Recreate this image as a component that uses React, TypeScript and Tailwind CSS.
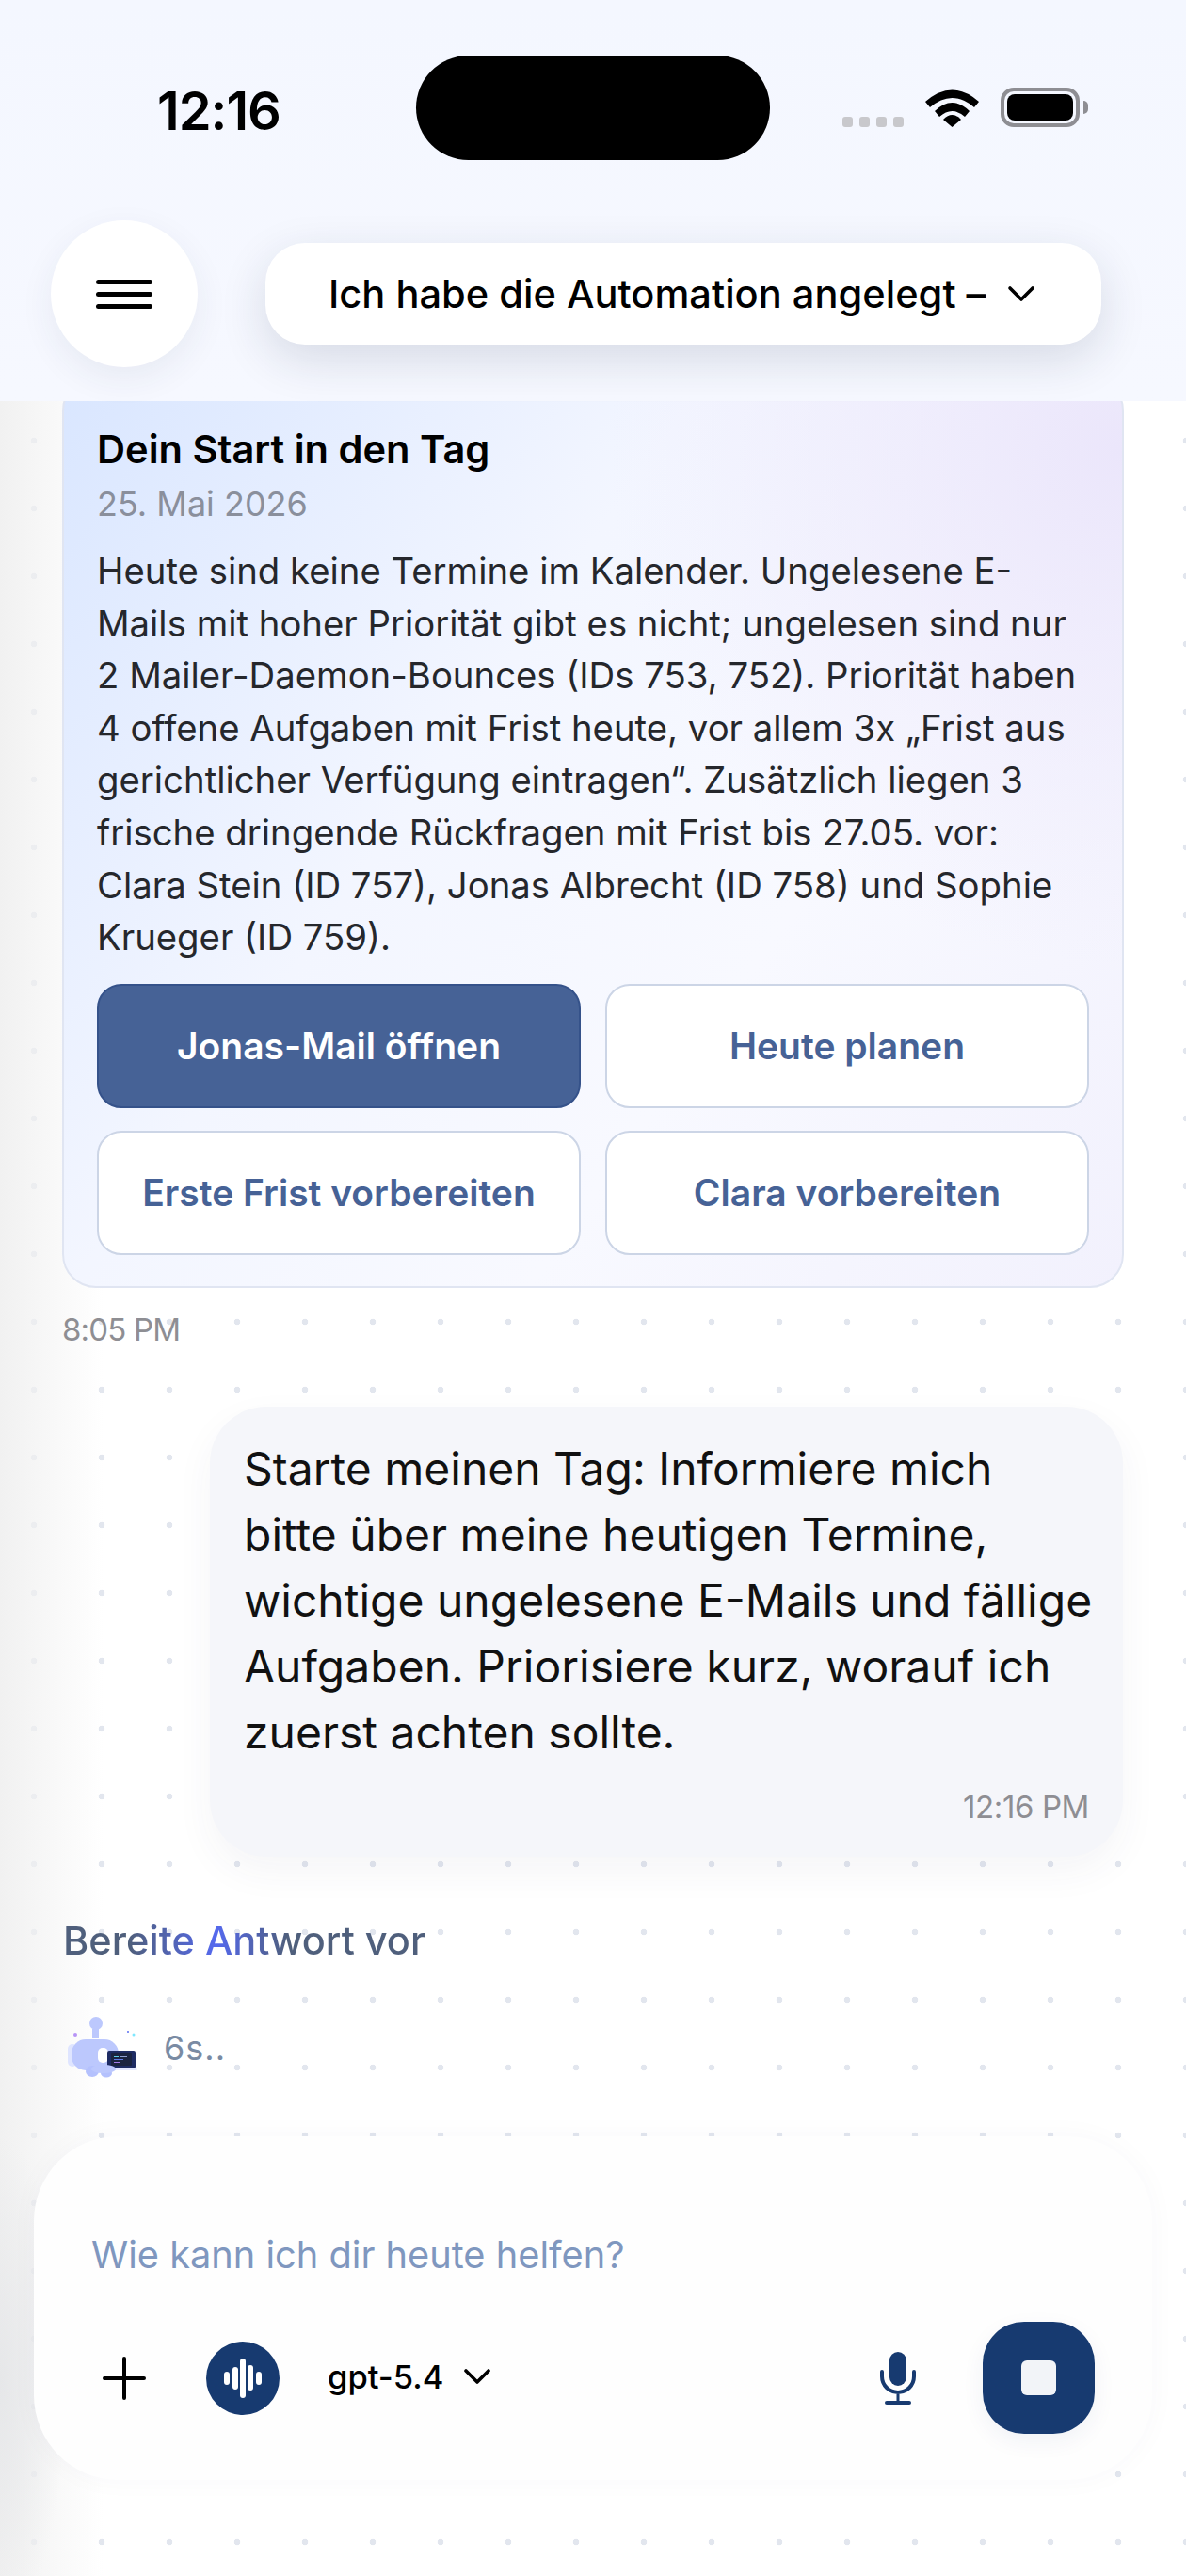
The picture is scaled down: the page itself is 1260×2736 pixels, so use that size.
import React from "react";
import { ChevronDown } from "lucide-react";

function StatusBar() {
  return (
    <div className="flex h-[174px] items-start pt-[59px]">
      <div className="w-[442px] pl-[167px] pt-[24px] text-[56px] leading-[70px] font-semibold tracking-[-1px] text-black">12:16</div>
      {/* Dynamic island */}
      <div className="h-[111px] w-[376px] rounded-full bg-black" />
      <div className="ml-[77px] mt-[34px] flex items-start">
        <div className="mt-[31px] flex gap-[7px]">
          <span className="h-[11px] w-[11px] rounded-[3px] bg-[#c8c8cc]" />
          <span className="h-[11px] w-[11px] rounded-[3px] bg-[#c8c8cc]" />
          <span className="h-[11px] w-[11px] rounded-[3px] bg-[#c8c8cc]" />
          <span className="h-[11px] w-[11px] rounded-[3px] bg-[#c8c8cc]" />
        </div>
        <svg className="ml-[23px]" width="57" height="42" viewBox="0 0 57 42">
          <path d="M0 15 Q28.5 -10 57 15 L52 21 Q28.5 1 5 21Z" fill="#000" />
          <path d="M10 25 Q28.5 7 47 25 L42 31 Q28.5 19 15 31Z" fill="#000" />
          <path d="M19 34 Q28.5 24 38 34 L28.5 42Z" fill="#000" />
        </svg>
        <div className="ml-[23px] flex items-center">
          <div className="h-[42px] w-[84px] rounded-[14px] border-[4px] border-[#8e8e93] p-[3px]">
            <div className="h-full w-full rounded-[8px] bg-black" />
          </div>
          <div className="ml-[4px] h-[14px] w-[5px] rounded-r-full bg-[#8e8e93]" />
        </div>
      </div>
    </div>
  );
}

function TopBar() {
  return (
    <div className="flex items-center pl-[54px] pt-[60px]">
      <button className="flex h-[156px] w-[156px] flex-col items-center justify-center gap-[8px] rounded-full bg-white shadow-[0_12px_36px_rgba(40,50,80,0.07)]">
        <span className="h-[5px] w-[60px] rounded-full bg-black" />
        <span className="h-[5px] w-[60px] rounded-full bg-black" />
        <span className="h-[5px] w-[60px] rounded-full bg-black" />
      </button>
      <button className="ml-[72px] flex h-[108px] w-[888px] items-center rounded-[42px] bg-white pl-[67px] text-[41.6px] font-medium text-black shadow-[0_16px_50px_rgba(30,40,70,0.14)]">
        <span className="w-[701px] whitespace-nowrap text-left">Ich habe die Automation angelegt –</span>
        <ChevronDown className="ml-[11px] h-[48px] w-[48px]" strokeWidth={1.8} />
      </button>
    </div>
  );
}

function BriefingCard() {
  return (
    <div className="mx-[66px] h-[968px] rounded-[36px] border-2 border-[#e0e5f2] bg-[radial-gradient(circle_at_100%_8%,#ebe6fb_0%,rgba(240,238,252,0)_38%),linear-gradient(125deg,#d9e6ff_0%,#f3f6ff_38%,#f8f9ff_65%,#f2f1fd_100%)] px-[35px] pt-[49px]">
      <h2 className="text-[41.6px] leading-[52px] font-semibold text-black">Dein Start in den Tag</h2>
      <p className="mt-[6px] text-[36px] leading-[52px] text-[#8a8f9c]">25. Mai 2026</p>
      <p className="mt-[18px] text-[38.3px] leading-[55.6px] text-[#25272c]">
        Heute sind keine Termine im Kalender. Ungelesene E-Mails mit hoher Priorität gibt es nicht; ungelesen sind nur 2 Mailer-Daemon-Bounces (IDs 753, 752). Priorität haben 4 offene Aufgaben mit Frist heute, vor allem 3x „Frist aus gerichtlicher Verfügung eintragen“. Zusätzlich liegen 3 frische dringende Rückfragen mit Frist bis 27.05. vor: Clara Stein (ID 757), Jonas Albrecht (ID 758) und Sophie Krueger (ID 759).
      </p>
      <div className="mt-[21px] grid grid-cols-2 gap-x-[26px] gap-y-[24px]">
        <button className="h-[132px] rounded-[26px] border-2 border-[#35528a] bg-[#466296] text-[39px] font-semibold text-white">Jonas-Mail öffnen</button>
        <button className="h-[132px] rounded-[26px] border-2 border-[#ccd5e6] bg-white text-[39px] font-semibold text-[#466296]">Heute planen</button>
        <button className="h-[132px] rounded-[26px] border-2 border-[#ccd5e6] bg-white text-[39px] font-semibold text-[#466296]">Erste Frist vorbereiten</button>
        <button className="h-[132px] rounded-[26px] border-2 border-[#ccd5e6] bg-white text-[39px] font-semibold text-[#466296]">Clara vorbereiten</button>
      </div>
    </div>
  );
}

function RobotIcon() {
  return (
    <svg width="78" height="68" viewBox="70 2142 78 68">
      <circle cx="102" cy="2150" r="7" fill="#bcc8fd" />
      <rect x="98" y="2156" width="7" height="10" fill="#bcc8fd" />
      <circle cx="80" cy="2162" r="2" fill="#b794f6" />
      <circle cx="136" cy="2159" r="1" fill="#5b6ef0" />
      <circle cx="142" cy="2162" r="1.5" fill="#7fe8ff" />
      <rect x="72" y="2172" width="10" height="24" rx="5" fill="#dfe5ff" />
      <rect x="76" y="2167" width="50" height="33" rx="15" fill="#bcc8fd" />
      <rect x="104" y="2176" width="11" height="16" rx="5" fill="#fff" />
      <rect x="114" y="2179" width="30" height="19" rx="2" fill="#1e2c63" />
      <rect x="118" y="2182" width="22" height="13" rx="1" fill="#1b2440" />
      <rect x="121" y="2185" width="5" height="1" fill="#5fd0e8" />
      <rect x="128" y="2185" width="7" height="1" fill="#8fa0d0" />
      <rect x="121" y="2188" width="10" height="1" fill="#5f7be8" />
      <rect x="121" y="2191" width="6" height="1" fill="#a47be8" />
      <rect x="112" y="2197" width="34" height="3" rx="1.5" fill="#e4e9ff" />
      <ellipse cx="98" cy="2201" rx="7" ry="6" fill="#b4c1fd" />
      <ellipse cx="113" cy="2203" rx="6" ry="4.5" fill="#b4c1fd" />
      <ellipse cx="110" cy="2198.5" rx="13" ry="4.5" fill="#bcc8fd" />
    </svg>
  );
}

function Composer() {
  return (
    <div className="mx-[36px] mt-[60px] h-[365px] rounded-[90px] bg-[#fefefe] pl-[61px] pr-[61px] pt-[99px] shadow-[0_0_30px_rgba(60,70,100,0.03)]">
      <p className="text-[39.75px] leading-[54px] text-[#7f97bf]">Wie kann ich dir heute helfen?</p>
      <div className="mt-[44px] flex h-[119px] items-center">
        <svg className="ml-[12px]" width="46" height="46" viewBox="0 0 46 46">
          <rect x="21" y="0" width="4" height="46" rx="2" fill="#000" />
          <rect x="0" y="21" width="46" height="4" rx="2" fill="#000" />
        </svg>
        <div className="ml-[64px] flex h-[78px] w-[78px] items-center justify-center rounded-full bg-[#173a70]">
          <svg width="42" height="42" viewBox="0 0 42 42" fill="#fff">
            <rect x="1" y="14" width="6" height="14" rx="3" />
            <rect x="10" y="9" width="6" height="24" rx="3" />
            <rect x="18" y="0" width="6" height="42" rx="3" />
            <rect x="26" y="7" width="6" height="27" rx="3" />
            <rect x="35" y="14" width="6" height="14" rx="3" />
          </svg>
        </div>
        <span className="ml-[51px] -mt-[2px] text-[34.5px] font-medium text-black">gpt-5.4</span>
        <ChevronDown className="ml-[12px] -mt-[4px] h-[48px] w-[48px] text-black" strokeWidth={1.8} />
        <svg className="ml-auto mr-[71px]" width="38" height="56" viewBox="0 0 38 56">
          <rect x="10" y="0" width="18" height="36" rx="9" fill="#173a70" />
          <path d="M2 21v5a17 17 0 0 0 34 0v-5" fill="none" stroke="#173a70" strokeWidth="4" strokeLinecap="round" />
          <rect x="17.5" y="45" width="3" height="8" fill="#173a70" />
          <rect x="5" y="52" width="28" height="4" rx="2" fill="#173a70" />
        </svg>
        <button className="flex h-[119px] w-[119px] items-center justify-center rounded-[44px] bg-[#173a70] shadow-[0_8px_24px_rgba(23,58,112,0.06)]">
          <span className="h-[37px] w-[37px] rounded-[6px] bg-[#f2f4f8]" />
        </button>
      </div>
    </div>
  );
}

export default function App() {
  return (
    <div className="relative flex h-[2736px] w-[1260px] flex-col overflow-hidden bg-white bg-[radial-gradient(circle,#e2e6ee_0,#e2e6ee_3px,transparent_3.6px)] bg-[length:72px_72px] font-[Inter,sans-serif]">
      {/* Drawer shadow down the left edge */}
      <div className="pointer-events-none absolute bottom-0 left-0 top-[426px] z-0 w-[110px] bg-[radial-gradient(ellipse_70px_260px_at_0_2104px,#e6e7e9,transparent),linear-gradient(90deg,#f1f1f1,transparent)]" />

      <header className="relative z-10 h-[426px] shrink-0 bg-[linear-gradient(180deg,#f4f7ff_0%,#f6f8ff_100%)]">
        <StatusBar />
        <TopBar />
      </header>

      <main className="relative z-0 -mt-[26px] flex flex-1 flex-col">
        <BriefingCard />
        <p className="mx-[66px] mt-[26px] text-[33px] leading-[36px] tracking-[-0.8px] text-[#8e8e93]">8:05 PM</p>

        <div className="ml-[223px] mr-[67px] mt-[64px] h-[478px] rounded-[60px] bg-[#f5f6fa] pl-[36px] pr-[30px] pt-[31px] shadow-[0_16px_40px_rgba(50,60,90,0.05)]">
          <p className="text-[48px] leading-[70px] text-[#111]">
            Starte meinen Tag: Informiere mich bitte über meine heutigen Termine, wichtige ungelesene E-Mails und fällige Aufgaben. Priorisiere kurz, worauf ich zuerst achten sollte.
          </p>
          <p className="mt-[26px] pr-[6px] text-right text-[33px] leading-[36px] tracking-[-0.4px] text-[#8e8e93]">12:16 PM</p>
        </div>

        <p className="ml-[67px] mt-[64px] w-[386px] whitespace-nowrap bg-[linear-gradient(90deg,#4f5f7c_0%,#4f5f7c_18%,#5569ee_42%,#4f5f7c_62%,#4f5f7c_100%)] bg-clip-text text-[41.5px] leading-[50px] font-medium text-transparent">Bereite Antwort vor</p>

        <div className="ml-[70px] mt-[55px] flex items-center">
          <RobotIcon />
          <span className="ml-[26px] text-[36px] leading-[44px] tracking-[1px] text-[#7a8ba3]">6s..</span>
        </div>

        <Composer />
      </main>
    </div>
  );
}
